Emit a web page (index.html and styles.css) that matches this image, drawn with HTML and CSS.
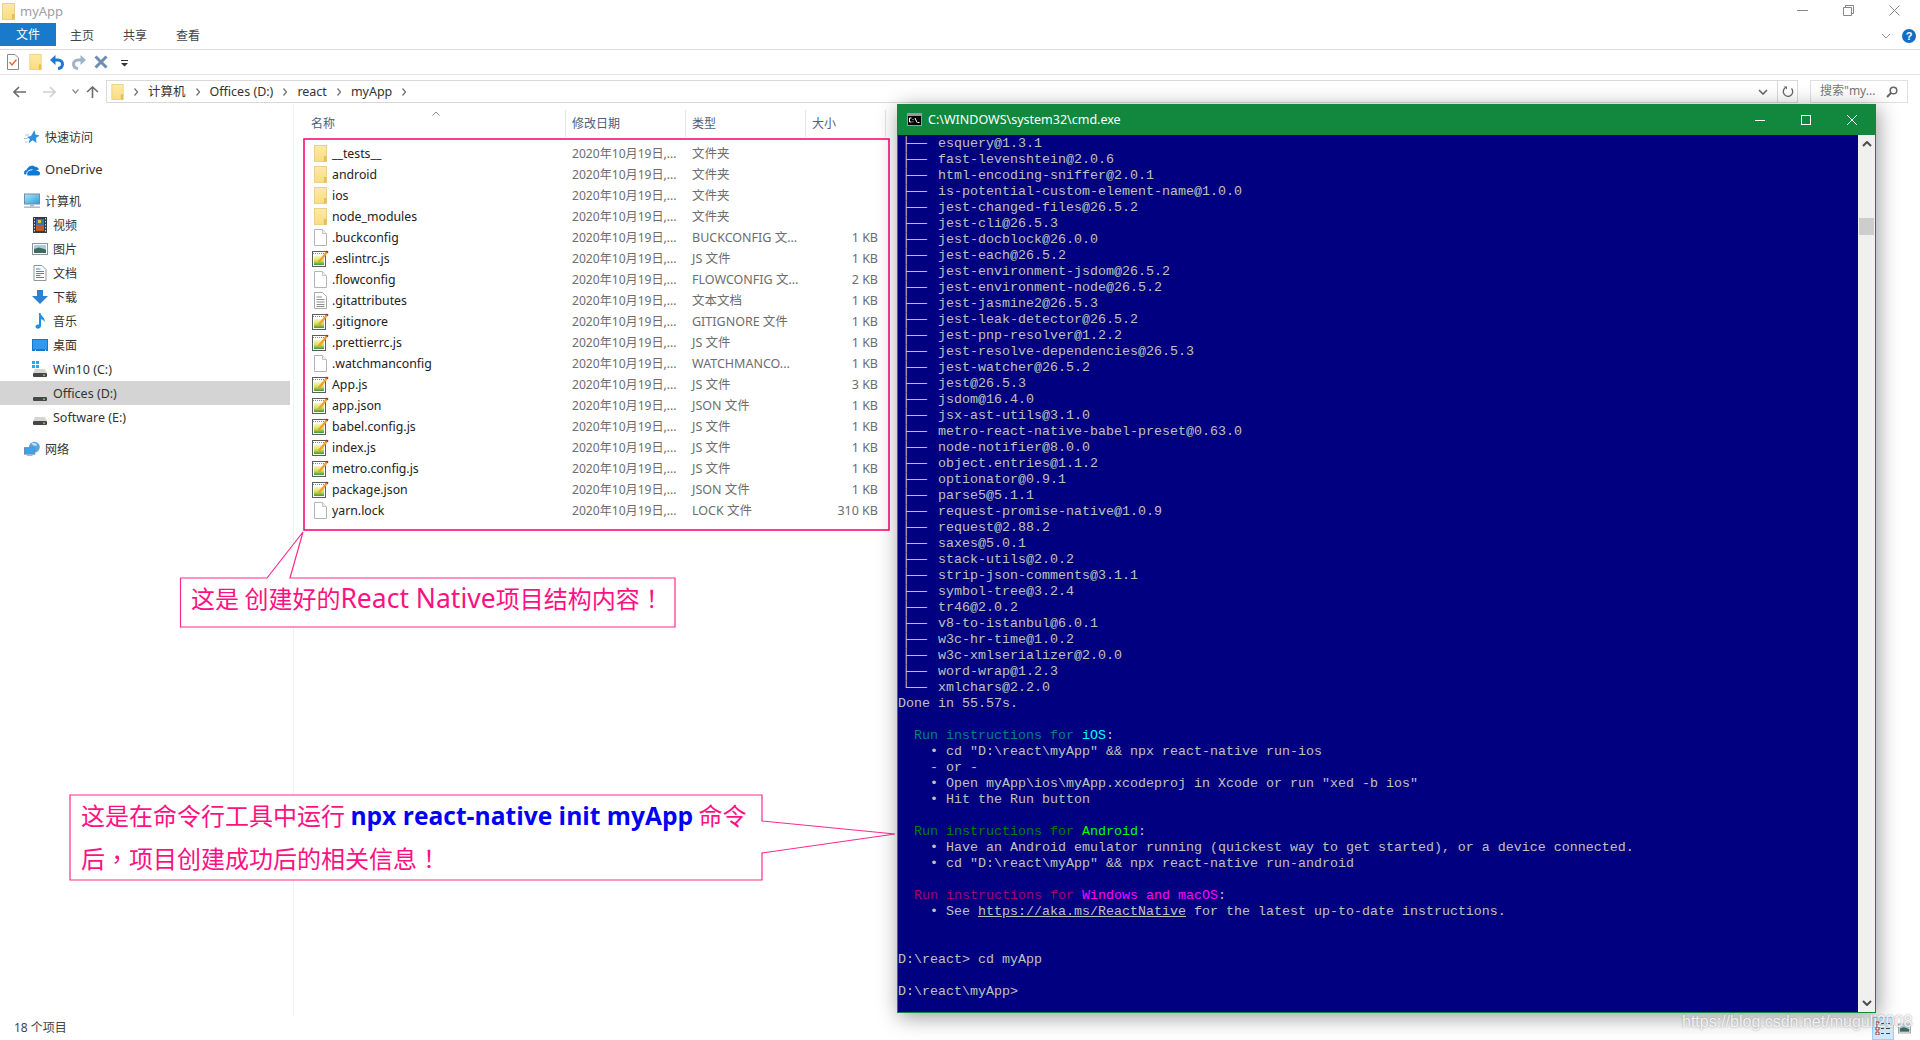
FILE: index.html
```html
<!DOCTYPE html>
<html lang="zh-CN">
<head>
<meta charset="utf-8">
<title>myApp</title>
<link rel="stylesheet" href="styles.css">
</head>
<body>
<svg class="defs" aria-hidden="true">
  <defs>
    <linearGradient id="gf" x1="0" y1="0" x2="0" y2="1"><stop offset="0" stop-color="#fdeaa6"/><stop offset="1" stop-color="#fbdc7e"/></linearGradient>
    <linearGradient id="gm" x1="0" y1="0" x2="1" y2="1"><stop offset="0" stop-color="#a5e4f7"/><stop offset="1" stop-color="#2f9fdc"/></linearGradient>
    <linearGradient id="gn" x1="0" y1="0" x2="0" y2="1"><stop offset="0" stop-color="#f6f6c8"/><stop offset=".55" stop-color="#d4df55"/><stop offset="1" stop-color="#2f9f3c"/></linearGradient>
    <symbol id="i-folder" viewBox="0 0 13 17"><rect x=".5" y=".5" width="12" height="16" fill="url(#gf)" stroke="#ecd089"/><rect x="10" y="11" width="2.5" height="5.5" fill="#e8bd52"/></symbol>
    <symbol id="i-file" viewBox="0 0 13 17"><path d="M.5.5H8.5L12.5 4.5V16.5H.5Z" fill="#fff" stroke="#b4b4b4"/><path d="M8.5.5V4.5H12.5" fill="#f0f0f0" stroke="#c4c4c4"/></symbol>
    <symbol id="i-text" viewBox="0 0 13 17"><path d="M.5.5H8.5L12.5 4.5V16.5H.5Z" fill="#fff" stroke="#a8a8a8"/><path d="M2.5 5H8M2.5 7.5H10.500M2.5 10H10.500M2.5 12.5H10.500M2.5 14.5H10.500" stroke="#8d8d8d"/></symbol>
    <symbol id="i-note" viewBox="0 0 17 17"><rect x=".5" y="1.500" width="13" height="15" fill="#fff" stroke="#5b5b5b"/><path d="M1 3.500H13" stroke="#888" stroke-dasharray="1 1"/><rect x="2" y="6" width="10" height="9" fill="url(#gn)"/><path d="M6.500 13.500L6 11L13.800 1.800L15.500 3.200L8 12.500Z" fill="#f0a22e"/><path d="M13.800 1.800L14.800 .4L16.600 1.800L15.500 3.200Z" fill="#9c2222"/></symbol>
    <symbol id="i-star" viewBox="0 0 16 16"><path d="M10.500 1L11.500 5.500L15.500 6.500L12 9L12.500 14L8.500 11.300L4.500 14.500L5.800 10L3 8L7 7Z" fill="#2f8fe0"/><path d="M1 6H5M0 9.500H3.500M1 13H3.500" stroke="#9cc9ef"/></symbol>
    <symbol id="i-cloud" viewBox="0 0 16 12"><path d="M1 10.500C-.5 8.500 1 6.300 3 6.200C4 2.500 8.500 .8 11 3.300C13 3 14.300 4.200 14.400 5.600" fill="#0f78d4" stroke="#0f78d4"/><path d="M3.200 11.500C3 8.500 5.500 6.500 8 6.500C11 6 14 6.200 16 8.500C16.300 10 15.500 11.500 14.500 11.500Z" fill="#0f78d4"/><path d="M2.500 9.500C3.500 7 6 5.500 8.500 5.800" stroke="#fff" fill="none"/></symbol>
    <symbol id="i-pc" viewBox="0 0 16 15"><rect x="0" y="0" width="16" height="11" fill="#6f8ca8"/><rect x="1" y="1" width="14" height="9" fill="url(#gm)"/><rect x="6" y="11" width="4" height="2" fill="#a7b7c6"/><rect x="0" y="13" width="16" height="1.500" fill="#b0bcc8"/></symbol>
    <symbol id="i-film" viewBox="0 0 14 16"><rect width="14" height="16" fill="#2f3b46"/><rect x="3" y="2" width="8" height="6" fill="#3b6fc0"/><rect x="3" y="8" width="8" height="6" fill="#c05a2a"/><rect x="5" y="3" width="3" height="3" fill="#e5c13a"/><path d="M1.500 1V15M12.500 1V15" stroke="#cfd4d8" stroke-dasharray="1.500 1.500"/></symbol>
    <symbol id="i-pic" viewBox="0 0 16 12"><rect x=".5" y=".5" width="15" height="11" fill="#fff" stroke="#8b949c"/><rect x="2" y="2" width="12" height="4" fill="#a9cbe4"/><path d="M2 6L7 4.500L14 6.500V10H2Z" fill="#3f6a5e"/></symbol>
    <symbol id="i-doc" viewBox="0 0 13 16"><path d="M.5.5H8.500L12.500 4.500V15.500H.5Z" fill="#fff" stroke="#8e979f"/><path d="M2.500 4H7M2.500 6.500H10.500M2.500 8.500H10.500M2.500 10.500H7M2.500 12.500H10.500" stroke="#2f90d8"/></symbol>
    <symbol id="i-down" viewBox="0 0 16 14"><path d="M5 0H11V6H16L8 14L0 6H5Z" fill="#2d81d4"/></symbol>
    <symbol id="i-music" viewBox="0 0 12 16"><path d="M5 0H6.500C7 3.500 11.500 4.500 10.500 9C9.800 7.500 8.500 6.500 7 6.300V13C7 15 4.500 16 3 15.500C1 15 1 12.500 3 11.800C3.800 11.500 4.500 11.500 5 11.800Z" fill="#1e8fe6"/></symbol>
    <symbol id="i-desk" viewBox="0 0 16 12"><rect width="16" height="12" fill="#1477d6"/><rect x="1" y="1" width="14" height="9" fill="#2f9bf0"/><rect x="3" y="10.800" width="1" height="1" fill="#fff"/><rect x="13" y="10.800" width="1" height="1" fill="#fff"/></symbol>
    <symbol id="i-drive" viewBox="0 0 14 8"><path d="M2 0H12L14 4H0Z" fill="#d5d5d5"/><rect y="4" width="14" height="4" rx="1" fill="#474747"/><rect x="10" y="5.500" width="2" height="1.500" fill="#52d452"/></symbol>
    <symbol id="i-net" viewBox="0 0 17 16"><circle cx="11" cy="6" r="5.800" fill="#5aa5e0"/><path d="M8 2C10 1 13 2 14 4C12 5 9 4.500 8 2Z" fill="#cfe7f8"/><rect x="0" y="6" width="12" height="8" fill="#6f8ca8"/><rect x="1" y="7" width="10" height="6" fill="#3ba4e8"/><rect x="3" y="14" width="6" height="1.500" fill="#a7b7c6"/></symbol>
    <symbol id="i-chev" viewBox="0 0 4 8"><path d="M.5 .5L3.500 4L.5 7.500" fill="none" stroke="#777" stroke-width="1.300"/></symbol>
    <symbol id="i-up" viewBox="0 0 10 6"><path d="M1 5L5 1L9 5" fill="none" stroke="#4d4d4d" stroke-width="2"/></symbol>
    <symbol id="i-dn" viewBox="0 0 10 6"><path d="M1 1L5 5L9 1" fill="none" stroke="#4d4d4d" stroke-width="2"/></symbol>
  </defs>
</svg>

<header class="titlebar">
  <svg class="ti-folder"><use href="#i-folder"/></svg>
  <span class="ti-text">myApp</span>
  <div class="winbtns">
    <svg class="wb" viewBox="0 0 11 11"><path d="M0 5.500H11" stroke="#888"/></svg>
    <svg class="wb" viewBox="0 0 11 11"><path d="M.5 2.500H8.500V10.500H.5ZM2.500 2.500V.5H10.500V8.500H8.500" fill="none" stroke="#888"/></svg>
    <svg class="wb" viewBox="0 0 11 11"><path d="M.5 .5L10.500 10.500M10.500 .5L.5 10.500" stroke="#888"/></svg>
  </div>
</header>

<nav class="tabs">
  <span class="tab tab-file">文件</span>
  <span class="tab">主页</span>
  <span class="tab">共享</span>
  <span class="tab">查看</span>
  <div class="tabs-right">
    <svg class="rib-chev" viewBox="0 0 10 6"><path d="M1 1L5 5L9 1" fill="none" stroke="#999"/></svg>
    <span class="help">?</span>
  </div>
</nav>

<div class="qat">
  <svg class="q q-check" viewBox="0 0 12 16"><path d="M.5.5H8L11.500 4V15.500H.5Z" fill="#fff" stroke="#888"/><path d="M2.500 8L5 11L9.500 5.500" fill="none" stroke="#e8622a" stroke-width="1.300"/></svg>
  <svg class="q q-folder"><use href="#i-folder"/></svg>
  <svg class="q q-ur" viewBox="0 0 14 15"><path d="M3 5H8C14 5 14 13 8 13.500" fill="none" stroke="#1f78d0" stroke-width="3"/><path d="M5.500 0V10L0 5Z" fill="#1f78d0"/></svg>
  <svg class="q q-ur" viewBox="0 0 14 15"><path d="M11 5H6C0 5 0 13 6 13.500" fill="none" stroke="#9fb4c8" stroke-width="3"/><path d="M8.500 0V10L14 5Z" fill="#9fb4c8"/></svg>
  <svg class="q q-x" viewBox="0 0 14 14"><path d="M1.500 1.500L12.500 12.500M12.500 1.500L1.500 12.500" stroke="#6f8db0" stroke-width="3"/></svg>
  <svg class="q q-drop" viewBox="0 0 7 7"><path d="M0 0H7V1H0ZM0 3H7L3.500 6.500Z" fill="#333"/></svg>
</div>

<div class="navbar">
  <svg class="nv nv-back" viewBox="0 0 13 12"><path d="M6 1L1 6L6 11M1 6H13" fill="none" stroke="#6c6c6c" stroke-width="1.600"/></svg>
  <svg class="nv nv-fwd" viewBox="0 0 13 12"><path d="M7 1L12 6L7 11M12 6H0" fill="none" stroke="#d0d0d0" stroke-width="1.600"/></svg>
  <svg class="nv nv-hist" viewBox="0 0 7 5"><path d="M.5 .5L3.500 4L6.500 .5" fill="none" stroke="#8a8a8a" stroke-width="1.200"/></svg>
  <svg class="nv nv-up" viewBox="0 0 13 12"><path d="M1 6L6.500 1L12 6M6.500 1V12" fill="none" stroke="#6c6c6c" stroke-width="1.600"/></svg>
  <div class="addr">
    <svg class="ad-folder"><use href="#i-folder"/></svg>
    <svg class="crumb-c"><use href="#i-chev"/></svg><span class="crumb">计算机</span>
    <svg class="crumb-c"><use href="#i-chev"/></svg><span class="crumb">Offices (D:)</span>
    <svg class="crumb-c"><use href="#i-chev"/></svg><span class="crumb">react</span>
    <svg class="crumb-c"><use href="#i-chev"/></svg><span class="crumb">myApp</span>
    <svg class="crumb-c"><use href="#i-chev"/></svg>
    <div class="ad-right">
      <svg class="ad-dd" viewBox="0 0 10 6"><path d="M1 1L5 5L9 1" fill="none" stroke="#666" stroke-width="1.600"/></svg>
      <div class="ad-ref"><svg class="ad-rf" viewBox="0 0 12 12"><path d="M9.500 2.500A4.700 4.700 0 1 1 3 2" fill="none" stroke="#666" stroke-width="1.300"/><path d="M1.500 .5H5V3.500Z" fill="#666"/></svg></div>
    </div>
  </div>
  <div class="search">
    <span>搜索"my...</span>
    <svg class="sr" viewBox="0 0 12 12"><circle cx="7.500" cy="4.500" r="3.300" fill="none" stroke="#666" stroke-width="1.500"/><path d="M5 7L1 11" stroke="#666" stroke-width="2"/></svg>
  </div>
</div>

<main class="main">
  <aside class="side">
    <div class="si si-top"><svg class="ic"><use href="#i-star"/></svg><span class="zh">快速访问</span></div>
    <div class="si si-top si-gap"><svg class="ic ic-cloud"><use href="#i-cloud"/></svg><span>OneDrive</span></div>
    <div class="si si-top si-gap2"><svg class="ic"><use href="#i-pc"/></svg><span class="zh">计算机</span></div>
    <div class="si"><svg class="ic"><use href="#i-film"/></svg><span class="zh">视频</span></div>
    <div class="si"><svg class="ic"><use href="#i-pic"/></svg><span class="zh">图片</span></div>
    <div class="si"><svg class="ic"><use href="#i-doc"/></svg><span class="zh">文档</span></div>
    <div class="si"><svg class="ic"><use href="#i-down"/></svg><span class="zh">下载</span></div>
    <div class="si"><svg class="ic"><use href="#i-music"/></svg><span class="zh">音乐</span></div>
    <div class="si"><svg class="ic"><use href="#i-desk"/></svg><span class="zh">桌面</span></div>
    <div class="si">
      <span class="ic-wrap"><svg class="ic-win" viewBox="0 0 7 7"><path d="M0 0H3V3H0ZM4 0H7V3H4ZM0 4H3V7H0ZM4 4H7V7H4Z" fill="#29a8e8"/></svg><svg class="ic-dr"><use href="#i-drive"/></svg></span><span class="lt">Win10 (C:)</span>
    </div>
    <div class="si si-sel"><span class="ic-wrap"><svg class="ic-dr"><use href="#i-drive"/></svg></span><span class="lt">Offices (D:)</span></div>
    <div class="si"><span class="ic-wrap"><svg class="ic-dr"><use href="#i-drive"/></svg></span><span class="lt">Software (E:)</span></div>
    <div class="si si-top si-gap3"><svg class="ic"><use href="#i-net"/></svg><span class="zh">网络</span></div>
  </aside>

  <section class="list">
    <div class="hdr">
      <span class="hc hc-name">名称<svg class="sort" viewBox="0 0 8 5"><path d="M.5 4.500L4 1L7.500 4.500" fill="none" stroke="#888"/></svg></span>
      <span class="hc hc-date">修改日期</span>
      <span class="hc hc-type">类型</span>
      <span class="hc hc-size">大小</span>
    </div>
    <div class="row"><svg class="ri"><use href="#i-folder"/></svg><span class="nm">__tests__</span><span class="dt">2020年10月19日,...</span><span class="ty">文件夹</span><span class="sz"></span></div>
    <div class="row"><svg class="ri"><use href="#i-folder"/></svg><span class="nm">android</span><span class="dt">2020年10月19日,...</span><span class="ty">文件夹</span><span class="sz"></span></div>
    <div class="row"><svg class="ri"><use href="#i-folder"/></svg><span class="nm">ios</span><span class="dt">2020年10月19日,...</span><span class="ty">文件夹</span><span class="sz"></span></div>
    <div class="row"><svg class="ri"><use href="#i-folder"/></svg><span class="nm">node_modules</span><span class="dt">2020年10月19日,...</span><span class="ty">文件夹</span><span class="sz"></span></div>
    <div class="row"><svg class="ri"><use href="#i-file"/></svg><span class="nm">.buckconfig</span><span class="dt">2020年10月19日,...</span><span class="ty">BUCKCONFIG 文...</span><span class="sz">1 KB</span></div>
    <div class="row"><svg class="rn"><use href="#i-note"/></svg><span class="nm">.eslintrc.js</span><span class="dt">2020年10月19日,...</span><span class="ty">JS 文件</span><span class="sz">1 KB</span></div>
    <div class="row"><svg class="ri"><use href="#i-file"/></svg><span class="nm">.flowconfig</span><span class="dt">2020年10月19日,...</span><span class="ty">FLOWCONFIG 文...</span><span class="sz">2 KB</span></div>
    <div class="row"><svg class="ri"><use href="#i-text"/></svg><span class="nm">.gitattributes</span><span class="dt">2020年10月19日,...</span><span class="ty">文本文档</span><span class="sz">1 KB</span></div>
    <div class="row"><svg class="rn"><use href="#i-note"/></svg><span class="nm">.gitignore</span><span class="dt">2020年10月19日,...</span><span class="ty">GITIGNORE 文件</span><span class="sz">1 KB</span></div>
    <div class="row"><svg class="rn"><use href="#i-note"/></svg><span class="nm">.prettierrc.js</span><span class="dt">2020年10月19日,...</span><span class="ty">JS 文件</span><span class="sz">1 KB</span></div>
    <div class="row"><svg class="ri"><use href="#i-file"/></svg><span class="nm">.watchmanconfig</span><span class="dt">2020年10月19日,...</span><span class="ty">WATCHMANCO...</span><span class="sz">1 KB</span></div>
    <div class="row"><svg class="rn"><use href="#i-note"/></svg><span class="nm">App.js</span><span class="dt">2020年10月19日,...</span><span class="ty">JS 文件</span><span class="sz">3 KB</span></div>
    <div class="row"><svg class="rn"><use href="#i-note"/></svg><span class="nm">app.json</span><span class="dt">2020年10月19日,...</span><span class="ty">JSON 文件</span><span class="sz">1 KB</span></div>
    <div class="row"><svg class="rn"><use href="#i-note"/></svg><span class="nm">babel.config.js</span><span class="dt">2020年10月19日,...</span><span class="ty">JS 文件</span><span class="sz">1 KB</span></div>
    <div class="row"><svg class="rn"><use href="#i-note"/></svg><span class="nm">index.js</span><span class="dt">2020年10月19日,...</span><span class="ty">JS 文件</span><span class="sz">1 KB</span></div>
    <div class="row"><svg class="rn"><use href="#i-note"/></svg><span class="nm">metro.config.js</span><span class="dt">2020年10月19日,...</span><span class="ty">JS 文件</span><span class="sz">1 KB</span></div>
    <div class="row"><svg class="rn"><use href="#i-note"/></svg><span class="nm">package.json</span><span class="dt">2020年10月19日,...</span><span class="ty">JSON 文件</span><span class="sz">1 KB</span></div>
    <div class="row"><svg class="ri"><use href="#i-file"/></svg><span class="nm">yarn.lock</span><span class="dt">2020年10月19日,...</span><span class="ty">LOCK 文件</span><span class="sz">310 KB</span></div>
  </section>
</main>

<footer class="status">
  <span>18 个项目</span>
  <div class="views">
    <span class="view-on"><svg class="vi" viewBox="0 0 16 14"><path d="M1 1H4V4H1ZM1 6H4V9H1ZM1 11H4V14H1Z" fill="#fff" stroke="#a33"/><path d="M6 2.500H9M11 2.500H15M6 7.500H9M11 7.500H15M6 12.500H9M11 12.500H15" stroke="#444"/></svg></span>
    <svg class="vp"><use href="#i-pic"/></svg>
  </div>
</footer>

<svg class="marks" viewBox="0 0 1920 1040" aria-hidden="true">
  <rect class="frame" x="304" y="139" width="585" height="391"/>
  <path class="bub" d="M180.500 578H267L303 532L290 578H675V627H180.500Z"/>
  <path class="bub" d="M70 795H762V821L895 834L762 853V880H70Z"/>
</svg>
<div class="note note-a">这是 创建好的<span class="lat">React Native</span>项目结构内容<span class="tc" lang="zh-TW">！</span></div>
<div class="note note-b">这是在命令行工具中运行 <b>npx react-native init myApp</b> 命令<br>后<span class="tc" lang="zh-TW">，</span>项目创建成功后的相关信息<span class="tc" lang="zh-TW">！</span></div>

<section class="cmd">
  <div class="cmd-title">
    <svg class="cmd-ic" viewBox="0 0 15 13"><rect width="15" height="13" fill="#9a9a9a"/><rect x="1" y="3" width="13" height="9" fill="#000"/><path d="M2.500 5H4.500M2.500 5V9H4.500M6 6V6.800M6 8.500V9.300M8 5L10 9.500M10.500 9.500H12.500" stroke="#fff" fill="none"/></svg>
    <span>C:\WINDOWS\system32\cmd.exe</span>
    <div class="cmd-btns">
      <svg class="cb" viewBox="0 0 10 10"><path d="M0 5.500H10" stroke="#fff"/></svg>
      <svg class="cb" viewBox="0 0 10 10"><rect x=".5" y=".5" width="9" height="9" fill="none" stroke="#fff"/></svg>
      <svg class="cb" viewBox="0 0 10 10"><path d="M0 0L10 10M10 0L0 10" stroke="#fff"/></svg>
    </div>
  </div>
  <div class="cmd-body">
    <div class="con">
      <div class="ln"><span class="tr">├──</span> esquery@1.3.1</div>
      <div class="ln"><span class="tr">├──</span> fast-levenshtein@2.0.6</div>
      <div class="ln"><span class="tr">├──</span> html-encoding-sniffer@2.0.1</div>
      <div class="ln"><span class="tr">├──</span> is-potential-custom-element-name@1.0.0</div>
      <div class="ln"><span class="tr">├──</span> jest-changed-files@26.5.2</div>
      <div class="ln"><span class="tr">├──</span> jest-cli@26.5.3</div>
      <div class="ln"><span class="tr">├──</span> jest-docblock@26.0.0</div>
      <div class="ln"><span class="tr">├──</span> jest-each@26.5.2</div>
      <div class="ln"><span class="tr">├──</span> jest-environment-jsdom@26.5.2</div>
      <div class="ln"><span class="tr">├──</span> jest-environment-node@26.5.2</div>
      <div class="ln"><span class="tr">├──</span> jest-jasmine2@26.5.3</div>
      <div class="ln"><span class="tr">├──</span> jest-leak-detector@26.5.2</div>
      <div class="ln"><span class="tr">├──</span> jest-pnp-resolver@1.2.2</div>
      <div class="ln"><span class="tr">├──</span> jest-resolve-dependencies@26.5.3</div>
      <div class="ln"><span class="tr">├──</span> jest-watcher@26.5.2</div>
      <div class="ln"><span class="tr">├──</span> jest@26.5.3</div>
      <div class="ln"><span class="tr">├──</span> jsdom@16.4.0</div>
      <div class="ln"><span class="tr">├──</span> jsx-ast-utils@3.1.0</div>
      <div class="ln"><span class="tr">├──</span> metro-react-native-babel-preset@0.63.0</div>
      <div class="ln"><span class="tr">├──</span> node-notifier@8.0.0</div>
      <div class="ln"><span class="tr">├──</span> object.entries@1.1.2</div>
      <div class="ln"><span class="tr">├──</span> optionator@0.9.1</div>
      <div class="ln"><span class="tr">├──</span> parse5@5.1.1</div>
      <div class="ln"><span class="tr">├──</span> request-promise-native@1.0.9</div>
      <div class="ln"><span class="tr">├──</span> request@2.88.2</div>
      <div class="ln"><span class="tr">├──</span> saxes@5.0.1</div>
      <div class="ln"><span class="tr">├──</span> stack-utils@2.0.2</div>
      <div class="ln"><span class="tr">├──</span> strip-json-comments@3.1.1</div>
      <div class="ln"><span class="tr">├──</span> symbol-tree@3.2.4</div>
      <div class="ln"><span class="tr">├──</span> tr46@2.0.2</div>
      <div class="ln"><span class="tr">├──</span> v8-to-istanbul@6.0.1</div>
      <div class="ln"><span class="tr">├──</span> w3c-hr-time@1.0.2</div>
      <div class="ln"><span class="tr">├──</span> w3c-xmlserializer@2.0.0</div>
      <div class="ln"><span class="tr">├──</span> word-wrap@1.2.3</div>
      <div class="ln"><span class="tr">└──</span> xmlchars@2.2.0</div>
      <div class="ln">Done in 55.57s.</div>
      <div class="ln"> </div>
      <div class="ln">  <span class="d-cy">Run instructions for </span><span class="b-cy">iOS</span>:</div>
      <div class="ln">    • cd "D:\react\myApp" &amp;&amp; npx react-native run-ios</div>
      <div class="ln">    - or -</div>
      <div class="ln">    • Open myApp\ios\myApp.xcodeproj in Xcode or run "xed -b ios"</div>
      <div class="ln">    • Hit the Run button</div>
      <div class="ln"> </div>
      <div class="ln">  <span class="d-gr">Run instructions for </span><span class="b-gr">Android</span>:</div>
      <div class="ln">    • Have an Android emulator running (quickest way to get started), or a device connected.</div>
      <div class="ln">    • cd "D:\react\myApp" &amp;&amp; npx react-native run-android</div>
      <div class="ln"> </div>
      <div class="ln">  <span class="d-mg">Run instructions for </span><span class="b-mg">Windows and macOS</span>:</div>
      <div class="ln">    • See <u>https://aka.ms/ReactNative</u> for the latest up-to-date instructions.</div>
      <div class="ln"> </div>
      <div class="ln"> </div>
      <div class="ln">D:\react&gt; cd myApp</div>
      <div class="ln"> </div>
      <div class="ln">D:\react\myApp&gt;</div>
    </div>
    <div class="sbar">
      <svg class="sb-a sb-up"><use href="#i-up"/></svg>
      <div class="thumb"></div>
      <svg class="sb-a sb-dn"><use href="#i-dn"/></svg>
    </div>
  </div>
</section>

<div class="wm">https://blog.csdn.net/muguli2008</div>
</body>
</html>
```

FILE: styles.css
```css
* { box-sizing: border-box; }
html, body { margin: 0; height: 100%; }
body {
  width: 1920px; height: 1040px; overflow: hidden; position: relative;
  display: flex; flex-direction: column;
  background: #fff; color: #222;
  font: 12.5px/1.2 "Noto Sans", "Noto Sans CJK SC", sans-serif;
}
svg { display: block; flex: none; }
.defs { position: absolute; width: 0; height: 0; }

.titlebar { height: 23px; display: flex; align-items: center; padding-left: 2px; flex: none; }
.ti-folder { width: 13px; height: 17px; }
.ti-text { margin-left: 5px; color: #a0a0a0; font-size: 13px; }
.winbtns { margin-left: auto; display: flex; gap: 35px; padding-right: 20px; margin-top: -3px; }
.wb { width: 11px; height: 11px; }

.tabs { height: 27px; display: flex; align-items: stretch; border-bottom: 1px solid #dadbdc; flex: none; }
.tab { padding: 4px 14.5px 0; display: flex; align-items: center; font-size: 12px; color: #444; height: 23px; }
.tab-file { width: 56px; padding: 2px 16px 0; background: #1979ca; color: #fff; }
.tab:nth-child(2) { margin-left: -.5px; }
.tabs-right { margin-left: auto; display: flex; align-items: center; gap: 11px; padding-right: 4px; }
.rib-chev { width: 10px; height: 6px; }
.help { width: 14px; height: 14px; border-radius: 50%; background: #0f6fc6; color: #fff; font: bold 11px/14px "Liberation Sans", sans-serif; text-align: center; }

.qat { height: 25px; display: flex; align-items: center; padding-left: 7px; border-bottom: 1px solid #e4e4e4; flex: none; }
.q-check { width: 12px; height: 16px; }
.q-folder { width: 13px; height: 16px; margin-left: 10px; }
.q-ur { width: 14px; height: 15px; margin-left: 8px; }
.q-x { width: 14px; height: 14px; margin-left: 8px; }
.q-drop { width: 7px; height: 7px; margin-left: 13px; margin-top: 2px; }

.navbar { height: 30px; display: flex; align-items: flex-start; padding: 5px 12px 0 0; flex: none; }
.nv { margin-top: 6px; }
.nv-back { width: 13px; height: 12px; margin-left: 13px; }
.nv-fwd { width: 13px; height: 12px; margin-left: 17px; }
.nv-hist { width: 7px; height: 5px; margin-left: 16px; margin-top: 9px; }
.nv-up { width: 13px; height: 12px; margin-left: 7px; }
.addr { margin-left: 7px; width: 1692px; height: 23px; border: 1px solid #d9d9d9; display: flex; align-items: center; padding-left: 4px; }
.ad-folder { width: 13px; height: 16px; }
.crumb-c { width: 4px; height: 8px; margin: 0 10px; }
.crumb { color: #333; font-size: 12.5px; }
.ad-right { margin-left: auto; display: flex; height: 100%; align-items: center; }
.ad-dd { width: 10px; height: 6px; margin-right: 9px; }
.ad-ref { width: 20px; height: 100%; border-left: 1px solid #d9d9d9; display: flex; align-items: center; justify-content: center; }
.ad-rf { width: 12px; height: 12px; }
.search { margin-left: 12px; width: 98px; height: 23px; border: 1px solid #e0e0e0; display: flex; align-items: center; padding: 0 9px; justify-content: space-between; color: #777; font-size: 12px; }
.sr { width: 12px; height: 12px; }

.main { flex: 1; display: flex; min-height: 0; }
.side { width: 293px; padding: 20px 3px 0 0; flex: none; }
.si { height: 24px; display: flex; align-items: center; padding-left: 32px; gap: 5px; font-size: 12px; color: #333; }
.si .lt { font-size: 12.5px; }
.si .zh { margin-top: 2px; }
.si-top { padding-left: 24px; }
.si-gap { margin-top: 9px; font-size: 13px; }
.si-gap2 { margin-top: 7px; }
.si-gap3 { margin-top: 8px; }
.si-sel { background: #d4d4d4; }
.ic { width: 16px; height: 16px; }
.ic-cloud { height: 12px; }
.ic-wrap { width: 16px; height: 16px; position: relative; display: flex; align-items: flex-end; justify-content: center; }
.ic-dr { width: 14px; height: 8px; }
.ic-win { position: absolute; left: 0; top: 0; width: 7px; height: 7px; }

.list { flex: 1; border-left: 1px solid #f2f2f2; min-width: 0; }
.hdr { height: 38px; display: flex; padding: 5px 0 0 17px; }
.hc { width: 120px; height: 27px; display: flex; align-items: center; padding: 2px 0 0 6px; font-size: 12px; color: #4c607a; border-right: 1px solid #e5e5e5; position: relative; }
.hc-name { width: 255px; padding-left: 0; }
.hc-size { width: 80px; }
.sort { position: absolute; left: 121px; top: 1px; width: 8px; height: 5px; }
.row { height: 21px; display: grid; grid-template-columns: 18px 240px 120px 120px 66px; align-items: center; padding-left: 20px; }
.ri { width: 13px; height: 17px; }
.rn { width: 17px; height: 17px; margin-left: -2px; }
.nm { color: #222; font-size: 12.3px; padding-top: 1px; }
.dt { color: #6d6d6d; font-size: 12.1px; white-space: nowrap; padding-top: 1px; }
.ty, .sz { color: #6d6d6d; font-size: 12.5px; white-space: nowrap; }
.sz { text-align: right; }

.status { height: 24px; flex: none; display: flex; align-items: center; padding-left: 14px; font-size: 12px; color: #444; position: relative; }
.views { margin-left: auto; display: flex; align-items: center; gap: 4px; padding-right: 9px; }
.view-on { width: 22px; height: 23px; background: #cce8ff; border: 1px solid #99d1ff; display: flex; align-items: center; justify-content: center; }
.vi { width: 16px; height: 14px; }
.vp { width: 13px; height: 11px; }

.marks { position: absolute; left: 0; top: 0; width: 1920px; height: 1040px; pointer-events: none; }
.frame { fill: none; stroke: #ff0a78; stroke-width: 1.600; }
.bub { fill: #fff; stroke: #ff2a90; stroke-width: 1.200; }
.note { position: absolute; color: #ff1183; font-size: 24px; white-space: nowrap; font-family: "Noto Sans CJK SC", "Noto Sans", sans-serif; }
.note b { color: #0000f5; font-family: "Open Sans", "Noto Sans", sans-serif; font-weight: 700; font-size: 24.6px; }
.note .lat { font-family: "Noto Sans", sans-serif; font-size: 26.5px; }
.note .tc { font-family: "Noto Sans CJK TC", sans-serif; }
.note-a { left: 191px; top: 580px; line-height: 36px; }
.note-b { left: 81px; top: 794px; line-height: 42px; }

.cmd { position: absolute; left: 897px; top: 104px; width: 979px; height: 909px; border: 1px solid #11883e; border-top: 0; display: flex; flex-direction: column; box-shadow: 2px 4px 20px rgba(0,0,0,.4); background: #000080; }
.cmd-title { height: 31px; background: #11883e; color: #fff; display: flex; align-items: center; padding-left: 9px; font-size: 12.5px; flex: none; }
.cmd-ic { width: 15px; height: 13px; margin-right: 6px; }
.cmd-btns { margin-left: auto; display: flex; gap: 36px; padding-right: 18px; }
.cb { width: 10px; height: 10px; }
.cmd-body { flex: 1; display: flex; min-height: 0; }
.con { flex: 1; padding-top: 1px; font: 13.33px/16px "Liberation Mono", monospace; color: #c0c0c0; overflow: hidden; }
.ln { height: 16px; white-space: pre; }
.tr { display: inline-block; width: 32px; height: 16px; padding-left: 3.8px; font: 14px/16px "Liberation Mono", monospace; vertical-align: top; }
.d-cy { color: #008080; } .b-cy { color: #00ffff; }
.d-gr { color: #008000; } .b-gr { color: #00ff00; }
.d-mg { color: #a00070; } .b-mg { color: #ff00ff; }
.sbar { width: 17px; background: #f0f0f0; display: flex; flex-direction: column; align-items: center; flex: none; }
.sb-a { width: 10px; height: 6px; }
.sb-up { margin-top: 6px; }
.thumb { width: 15px; height: 17px; background: #cdcdcd; margin-top: 71px; }
.sb-dn { margin-top: auto; margin-bottom: 6px; }

.wm { position: absolute; left: 1682px; top: 1012px; font: 16px/20px "Liberation Sans", sans-serif; color: rgba(255,255,255,.85); text-shadow: 0 0 2px rgba(120,120,120,.8); white-space: nowrap; }
```
